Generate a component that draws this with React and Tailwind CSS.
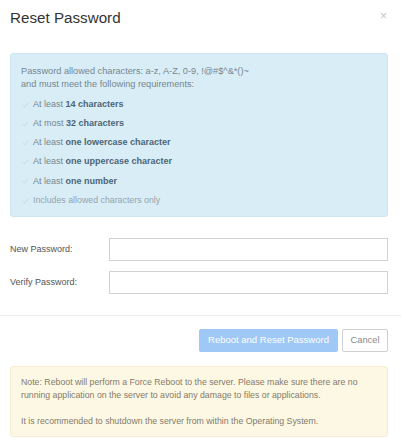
import React from "react";

const Check = () => (
  <svg width="7" height="6" viewBox="0 0 8 7" className="shrink-0">
    <path d="M0.8 3.6 L3 5.8 L7.2 0.8" fill="none" stroke="#c8e0eb" strokeWidth="1.4" />
  </svg>
);

const reqs = [
  ["At least ", "14 characters"],
  ["At most ", "32 characters"],
  ["At least ", "one lowercase character"],
  ["At least ", "one uppercase character"],
  ["At least ", "one number"],
];

export default function App() {
  return (
    <div className="w-[401px] h-[439px] bg-white overflow-hidden" style={{ fontFamily: '"Liberation Sans", Arial, sans-serif' }}>
      <div className="flex items-start justify-between pl-[10px] pr-[14px] pt-[8px] h-[53px]">
        <h1 className="text-[15.2px] leading-[20px] text-[#333]">Reset Password</h1>
        <span className="text-[12px] leading-[12px] text-[#c4c4c4] mt-[2px]">×</span>
      </div>
      <div className="px-[10px] w-[398px]">
        <div className="bg-[#d9edf7] border border-[#cfe6f2] rounded-[3px] h-[164px] pt-[11px] pl-[10px]">
          <div className="text-[9.2px] leading-[12.5px] text-[#76868f]">
            <div>Password allowed characters: a-z, A-Z, 0-9, !@#$^&amp;*()~</div>
            <div>and must meet the following requirements:</div>
          </div>
          <div className="mt-[5px] flex flex-col">
            {reqs.map(([a, b], i) => (
              <div key={i} className="flex items-center gap-[4px] h-[19.2px] pl-[1px] text-[9px] text-[#76868f]">
                <Check />
                <span>
                  {a}
                  <b className="font-bold text-[#4b6576]">{b}</b>
                </span>
              </div>
            ))}
            <div className="flex items-center gap-[4px] h-[19.2px] pl-[1px] text-[8.8px] text-[#93a3ac]">
              <Check />
              <span>Includes allowed characters only</span>
            </div>
          </div>
        </div>
        <div className="mt-[21px] flex flex-col gap-[10px]">
          <div className="flex items-center">
            <label className="w-[99px] text-[9px] text-[#555]">New Password:</label>
            <input type="password" className="flex-1 h-[23px] border border-[#d2d2d2] bg-white outline-none" />
          </div>
          <div className="flex items-center">
            <label className="w-[99px] text-[9px] text-[#555]">Verify Password:</label>
            <input type="password" className="flex-1 h-[23px] border border-[#d2d2d2] bg-white outline-none" />
          </div>
        </div>
      </div>
      <div className="mt-[21px] border-t border-[#ececec]" />
      <div className="px-[10px] w-[398px]">
        <div className="flex justify-end gap-[4px] mt-[13px]">
          <button className="h-[23px] w-[139px] bg-[#9fc8f6] text-white text-[9.5px] rounded-[2px]">Reboot and Reset Password</button>
          <button className="h-[23px] w-[46px] border border-[#d0d0d0] bg-white text-[#888] text-[9.3px] rounded-[2px]">Cancel</button>
        </div>
        <div className="mt-[14px] bg-[#fcf8e3] border border-[#f7ecd2] rounded-[3px] h-[71px] pt-[9px] pl-[10px] text-[8.75px] leading-[13px] text-[#857a6c]">
          <div>Note: Reboot will perform a Force Reboot to the server. Please make sure there are no</div>
          <div>running application on the server to avoid any damage to files or applications.</div>
          <div className="mt-[13px]">It is recommended to shutdown the server from within the Operating System.</div>
        </div>
      </div>
    </div>
  );
}
